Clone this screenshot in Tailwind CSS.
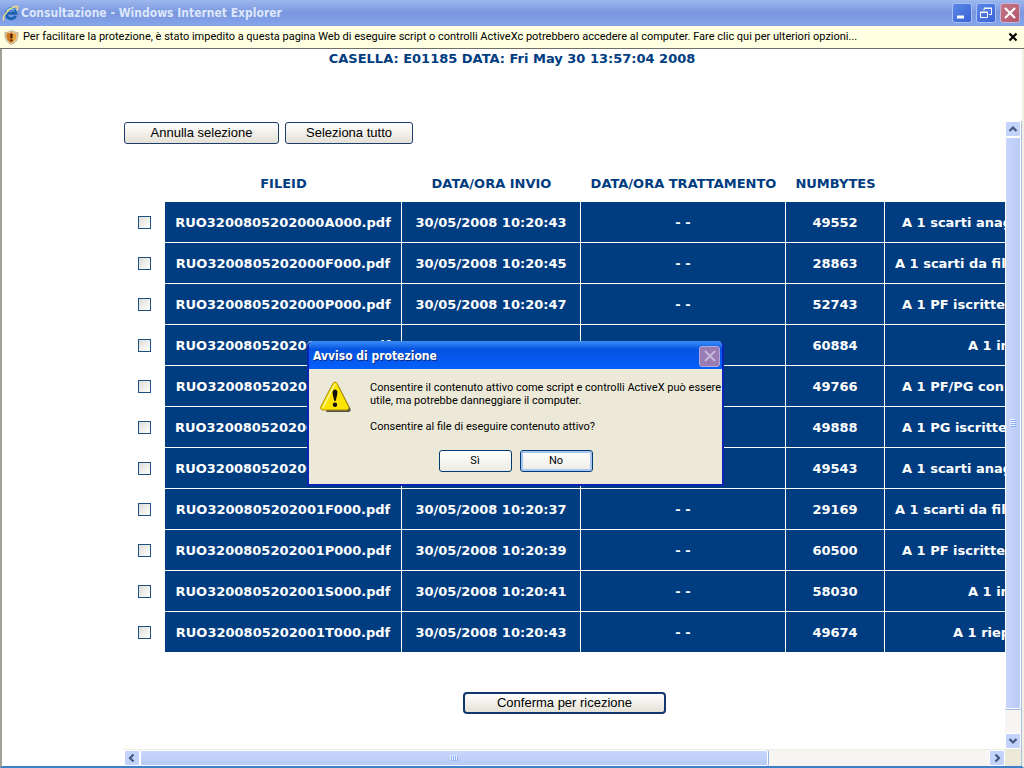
<!DOCTYPE html>
<html lang="it">
<head>
<meta charset="utf-8">
<title>Consultazione - Windows Internet Explorer</title>
<script src="https://cdn.jsdelivr.net/npm/@tailwindcss/browser@4"></script>
</head>
<body class="relative flex h-screen flex-col overflow-hidden bg-white font-['DejaVu_Sans',sans-serif] text-[13px] text-black">

<header class="flex h-[26px] shrink-0 items-center gap-0.5 bg-linear-to-b from-[#9db8ee] via-[#7a96df] to-[#86a6ec] pr-1 pl-0.5">
  <svg class="size-[17px] shrink-0" viewBox="0 0 17 17" aria-hidden="true">
    <path d="M13.600 10.800A4.900 4.900 0 1 1 14 8.300H6" fill="none" stroke="#1c63b4" stroke-width="3"/>
    <path d="M4.600 6.200A4.900 4.900 0 0 1 12.500 5.400" fill="none" stroke="#7fd8f4" stroke-width="1.400"/>
    <path d="M2 15.500C-.5 12.500 7 2 15 1.300c1.700.7.600 2.800-.6 4.200" fill="none" stroke="#f0dc8a" stroke-width="1.400"/>
  </svg>
  <h1 class="grow truncate font-['DejaVu_Sans_Condensed','DejaVu_Sans',sans-serif] text-[12px] font-bold text-[#dce7fb]">Consultazione - Windows Internet Explorer</h1>
  <div class="flex gap-1">
    <button aria-label="Riduci a icona" class="grid size-5 place-items-center rounded-[3px] border border-[#a9c0f2] bg-linear-to-br from-[#5c87e6] to-[#3a63d6]">
      <svg class="size-4" viewBox="0 0 16 16"><path d="M3 12h7" stroke="#fff" stroke-width="3"/></svg>
    </button>
    <button aria-label="Ripristina" class="grid size-5 place-items-center rounded-[3px] border border-[#a9c0f2] bg-linear-to-br from-[#5c87e6] to-[#3a63d6]">
      <svg class="size-4" viewBox="0 0 16 16" fill="none" stroke="#fff"><path d="M6 5.500V3.500h7.500v6H11M6 3h8" /><path d="M2.500 7.500h7v5h-7zM2 7h8"/></svg>
    </button>
    <button aria-label="Chiudi" class="grid size-5 place-items-center rounded-[3px] border border-[#c9b4d8] bg-linear-to-br from-[#c4768a] to-[#b4566a]">
      <svg class="size-4" viewBox="0 0 16 16"><path d="M3 3l10 10M13 3L3 13" stroke="#fff" stroke-width="2.200"/></svg>
    </button>
  </div>
</header>

<div class="flex h-[23px] shrink-0 items-center gap-1 border-b border-[#6f6f66] bg-[#ffffe1] pr-1.5 pl-1">
  <svg class="h-[15px] w-[15px] shrink-0" viewBox="0 0 15 15" aria-hidden="true">
    <path d="M7.500.5C9.500 2 12 2.500 14 2.500c.2 6-1.500 10-6.500 12C2.500 12.500.8 8.500 1 2.500c2 0 4.500-.5 6.500-2z" fill="#e8dcc0" stroke="#a89878" stroke-width=".8"/>
    <path d="M7.500 2C9 3 11 3.600 12.600 3.700c0 4.800-1.500 7.800-5.100 9.400C3.900 11.500 2.400 8.500 2.400 3.700 4 3.600 6 3 7.500 2z" fill="#e9a23c"/>
    <path d="M7.500 2v11.100C3.900 11.500 2.400 8.500 2.400 3.700 4 3.600 6 3 7.500 2z" fill="#cf7420"/>
    <path d="M7.500 3.800v4.400M7.500 9.400v1.800" stroke="#3a1600" stroke-width="2"/>
  </svg>
  <a href="#" class="grow truncate font-[Roboto,sans-serif] text-[11px]">Per facilitare la protezione, è stato impedito a questa pagina Web di eseguire script o controlli ActiveXc potrebbero accedere al computer. Fare clic qui per ulteriori opzioni...</a>
  <button aria-label="Chiudi barra informazioni" class="grid size-2.5 place-items-center">
    <svg class="size-2.5" viewBox="0 0 10 10"><path d="M1.500 1.500l7 7M8.500 1.500l-7 7" stroke="#000" stroke-width="2.200"/></svg>
  </button>
</div>

<main class="flex min-h-0 grow flex-col border-r-2 border-b-2 border-l-2 border-r-[#f1efe2] border-b-[#3c80c8] border-l-[#a3a197]">
  <h2 class="h-[72px] shrink-0 pt-0.5 text-center font-bold leading-4 text-[#003c80]">CASELLA: E01185 DATA: Fri May 30 13:57:04 2008</h2>

  <div class="ml-[122px] flex min-h-0 grow">
    <div class="flex min-w-0 grow flex-col">
      <form class="min-h-0 grow overflow-hidden pt-px">
        <div class="flex gap-1.5 font-['Liberation_Sans',sans-serif]">
          <button type="button" class="h-[22px] w-[155px] rounded-[3px] border border-[#1c3d6c] bg-linear-to-b from-white to-[#e4e1d6]">Annulla selezione</button>
          <button type="button" class="h-[22px] w-32 rounded-[3px] border border-[#1c3d6c] bg-linear-to-b from-white to-[#e4e1d6]">Seleziona tutto</button>
        </div>
        <table class="mt-5 w-[1192px] table-fixed border-separate border-spacing-0 text-center font-bold text-white">
          <colgroup><col class="w-[41px]"><col class="w-[237px]"><col class="w-[179px]"><col class="w-[205px]"><col class="w-[99px]"><col></colgroup>
          <thead class="text-[#003c80]">
            <tr class="h-[38px] *:pt-0.5"><th></th><th>FILEID</th><th>DATA/ORA INVIO</th><th>DATA/ORA TRATTAMENTO</th><th>NUMBYTES</th><th></th></tr>
          </thead>
          <tbody id="righe"></tbody>
        </table>
        <div class="mt-[39px] flex justify-center font-['Liberation_Sans',sans-serif]">
          <button type="button" class="h-[22px] w-[203px] rounded-[4px] border-2 border-[#12366e] bg-linear-to-b from-white to-[#e4e1d6] leading-4">Conferma per ricezione</button>
        </div>
      </form>
      <div class="flex h-[17px] shrink-0 border-t border-[#eeede5] bg-[#f6f5f1]">
        <button aria-label="Scorri a sinistra" class="grid size-4 shrink-0 place-items-center rounded-xs border border-white bg-[#c4d3fb]">
          <svg class="size-3" viewBox="0 0 12 12"><path d="M7.500 2.500L4 6l3.500 3.500" fill="none" stroke="#43577f" stroke-width="2.200"/></svg>
        </button>
        <div class="flex grow">
          <div class="grid w-[74%] place-items-center rounded-xs border border-white bg-linear-to-b from-[#c9d6fc] to-[#b6cbf9] shadow-[1px_0_0_#9db5e4]">
            <svg class="h-1.5 w-2" viewBox="0 0 8 6"><path d="M.5 0v5M2.500 0v5M4.500 0v5M6.500 0v5" stroke="#eef4fe"/><path d="M1.500 1v5M3.500 1v5M5.500 1v5M7.500 1v5" stroke="#8cb0f8"/></svg>
          </div>
        </div>
        <button aria-label="Scorri a destra" class="grid size-4 shrink-0 place-items-center rounded-xs border border-white bg-[#c4d3fb]">
          <svg class="size-3" viewBox="0 0 12 12"><path d="M4.500 2.500L8 6 4.500 9.500" fill="none" stroke="#43577f" stroke-width="2.200"/></svg>
        </button>
      </div>
    </div>
    <div class="flex w-[17px] shrink-0 flex-col border-r border-[#a9bfe8] bg-[#f6f5f1]">
      <button aria-label="Scorri in alto" class="grid size-4 shrink-0 place-items-center rounded-xs border border-white bg-[#c4d3fb]">
        <svg class="size-3" viewBox="0 0 12 12"><path d="M2.500 8L6 4.500 9.500 8" fill="none" stroke="#43577f" stroke-width="2.200"/></svg>
      </button>
      <div class="grow">
        <div class="grid h-[96%] w-4 place-items-center rounded-xs border border-white bg-linear-to-r from-[#c9d6fc] to-[#b9cbf9] shadow-[0_1px_0_#9db5e4]">
          <svg class="h-2 w-1.5" viewBox="0 0 6 8"><path d="M0 .5h5M0 2.500h5M0 4.500h5M0 6.500h5" stroke="#eef4fe"/><path d="M1 1.500h5M1 3.500h5M1 5.500h5M1 7.500h5" stroke="#8cb0f8"/></svg>
        </div>
      </div>
      <button aria-label="Scorri in basso" class="grid size-4 shrink-0 place-items-center rounded-xs border border-white bg-[#c4d3fb]">
        <svg class="size-3" viewBox="0 0 12 12"><path d="M2.500 4L6 7.500 9.500 4" fill="none" stroke="#43577f" stroke-width="2.200"/></svg>
      </button>
      <div class="h-[17px] shrink-0 bg-[#ece9d8]"></div>
    </div>
  </div>
</main>

<section role="dialog" aria-labelledby="avviso" class="absolute top-[341px] left-[307px] flex w-[417px] flex-col overflow-hidden rounded-t-md border-2 border-t-0 border-[#0a24b8] bg-[#ece9d8] font-[Roboto,sans-serif] text-[11px]">
  <div class="flex h-7 items-center justify-between bg-linear-to-b from-[#3a8cf8] via-[#0553e0] via-30% to-[#0560fa] pt-0.5 pr-0.5 pl-1">
    <h3 id="avviso" class="font-['DejaVu_Sans_Condensed','DejaVu_Sans',sans-serif] text-[12px] font-bold text-white [text-shadow:1px_1px_0_#0a2a80]">Avviso di protezione</h3>
    <button disabled aria-label="Chiudi" class="grid size-[21px] place-items-center rounded-[3px] border border-[#b3a9dc] bg-[#9a7cb4]">
      <svg class="size-4" viewBox="0 0 16 16"><path d="M3 3l10 10M13 3L3 13" stroke="#c6b8dc" stroke-width="2"/></svg>
    </button>
  </div>
  <div class="flex gap-[18px] pt-3 pl-[11px]">
    <svg class="h-8 w-8 shrink-0" viewBox="0 0 32 32" aria-hidden="true">
      <path d="M16.500 3.500c1.200 0 1.800.8 2.300 1.800l11.500 22.200c.9 1.900.2 3.500-2 3.500H6z" fill="#55534a"/>
      <path d="M13 2.300c.8-1.600 3.200-1.600 4 0l11.600 23.200c.8 1.700-.1 3.500-2 3.500H2.900c-1.900 0-2.800-1.800-2-3.500z" fill="#fce300" stroke="#a88c00"/>
      <path d="M15 3L3 26.500" stroke="#fff8a0" stroke-width="1.500"/>
      <path d="M12.600 11.300c0-3.800 4.800-3.800 4.800 0 0 3-1 5-1.500 8.500h-1.800c-.5-3.500-1.500-5.500-1.500-8.500z" fill="#111"/>
      <circle cx="15" cy="23.800" r="2.200" fill="#111"/>
    </svg>
    <div class="leading-[13px] whitespace-nowrap">
      <p>Consentire il contenuto attivo come script e controlli ActiveX può essere<br>utile, ma potrebbe danneggiare il computer.</p>
      <p class="mt-[13px]">Consentire al file di eseguire contenuto attivo?</p>
    </div>
  </div>
  <div class="mt-[17px] mb-3 flex justify-center gap-2">
    <button class="h-[22px] w-[73px] rounded-[3px] border border-[#003c74] bg-linear-to-b from-white to-[#ecebe5]">Sì</button>
    <button class="h-[22px] w-[73px] rounded-[3px] border border-[#003c74] bg-linear-to-b from-white to-[#ecebe5] shadow-[inset_0_0_0_2px_#a9c6f2]">No</button>
  </div>
</section>

<script>
  const righe = [
    ["RUO3200805202000A000.pdf", "30/05/2008 10:20:43", "49552", "A 1 scarti anag", "pl-[17px]"],
    ["RUO3200805202000F000.pdf", "30/05/2008 10:20:45", "28863", "A 1 scarti da filt", "pl-[10px]"],
    ["RUO3200805202000P000.pdf", "30/05/2008 10:20:47", "52743", "A 1 PF iscritte", "pl-[17px]"],
    ["RUO3200805202000S000.pdf", "", "60884", "A 1 in", "pl-[83px]"],
    ["RUO3200805202000T000.pdf", "", "49766", "A 1 PF/PG con", "pl-[17px]"],
    ["RUO3200805202000U000.pdf", "", "49888", "A 1 PG iscritte", "pl-[17px]"],
    ["RUO3200805202001A000.pdf", "", "49543", "A 1 scarti anag", "pl-[17px]"],
    ["RUO3200805202001F000.pdf", "30/05/2008 10:20:37", "29169", "A 1 scarti da filt", "pl-[10px]"],
    ["RUO3200805202001P000.pdf", "30/05/2008 10:20:39", "60500", "A 1 PF iscritte", "pl-[17px]"],
    ["RUO3200805202001S000.pdf", "30/05/2008 10:20:41", "58030", "A 1 in", "pl-[83px]"],
    ["RUO3200805202001T000.pdf", "30/05/2008 10:20:43", "49674", "A 1 riep", "pl-[68px]"]
  ];
  const cella = "border-r border-b border-white bg-[#003c80] pt-0.5";
  document.getElementById("righe").innerHTML = righe.map(([file, invio, byte, nota, rientro]) => `
    <tr class="h-[41px]">
      <td><input type="checkbox" aria-label="${file}" class="mx-auto block size-[13px] appearance-none border border-[#1c5180] bg-linear-to-br from-[#dcdcd7] to-white"></td>
      <td class="${cella}">${file}</td>
      <td class="${cella}">${invio}</td>
      <td class="${cella}">${invio && "- -"}</td>
      <td class="${cella}">${byte}</td>
      <td class="${cella} ${rientro} text-left">${nota}</td>
    </tr>`).join("");
</script>
</body>
</html>
